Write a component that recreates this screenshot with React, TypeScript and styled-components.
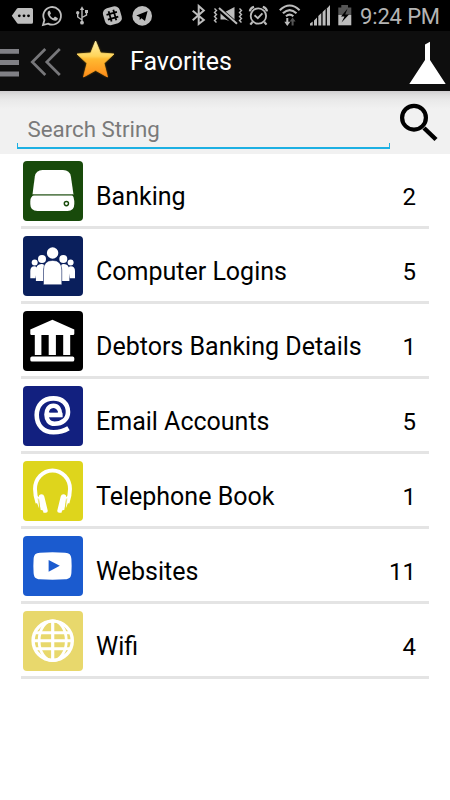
import React from "react";
import styled, { createGlobalStyle } from "styled-components";

const GlobalStyle = createGlobalStyle`
  * { box-sizing: border-box; }
  body { margin: 0; background: #fff; font-family: Roboto, "Liberation Sans", sans-serif; }
  svg { display: block; flex: none; }
`;

const Screen = styled.div`
  width: 450px;
  height: 800px;
  background: #fff;
  overflow: hidden;
`;

const StatusBar = styled.div`
  display: flex;
  height: 31px;
  background: #000;
`;

const Clock = styled.span`
  flex: 1;
  padding-left: 5px;
  font-size: 22px;
  line-height: 34px;
  letter-spacing: -0.15px;
  white-space: nowrap;
  color: #b4b4b4;
`;

const Header = styled.header`
  display: flex;
  height: 60px;
  background: #0e0e0e;
`;

const Title = styled.h1`
  flex: 1;
  margin: 0;
  padding-left: 6px;
  font-size: 25px;
  font-weight: 400;
  line-height: 61px;
  color: #fff;
`;

const SearchBar = styled.div`
  display: flex;
  height: 63px;
  padding-left: 17px;
  background: linear-gradient(#cfcdcf 0, #dedede 4px, #e9e9e9 9px, #f1f1f1 18px);
`;

const SearchField = styled.div`
  width: 373px;
  height: 58px;
  padding: 20px 0 0 10.5px;
  font-size: 22.3px;
  line-height: 36px;
  color: #7a7a7a;
  border-bottom: 2px solid #1db0e3;
  background:
    linear-gradient(#1db0e3, #1db0e3) left bottom / 1px 4px no-repeat,
    linear-gradient(#1db0e3, #1db0e3) right bottom / 1px 4px no-repeat;
`;

const List = styled.ul`
  margin: 0;
  padding: 0 21px;
  list-style: none;
`;

const Row = styled.li`
  display: flex;
  height: 75px;
  border-bottom: 3px solid #e4e4e4;
`;

const Tile = styled.div<{ $color: string }>`
  width: 60px;
  height: 60px;
  margin: 7px 0 0 1.5px;
  border-radius: 4px;
  background: ${(p) => p.$color};
`;

const Label = styled.span`
  flex: 1;
  padding-left: 13.5px;
  font-size: 25px;
  line-height: 85px;
  color: #000;
  white-space: nowrap;
`;

const Count = styled.span`
  padding-right: 13px;
  font-size: 24px;
  line-height: 86px;
  color: #000;
`;

type SliceProps = { x: number; w: number; y?: number; h?: number; children: React.ReactNode };

/* Icon cell whose drawing uses the coordinates of its bar. */
const Slice = ({ x, w, y = 0, h = 31, children }: SliceProps) => (
  <svg width={w} height={h} viewBox={`${x} ${y} ${w} ${h}`} fill="none">
    {children}
  </svg>
);

const G = "#bdbdbd";

const StatusIcons = () => (
  <>
    <Slice x={0} w={38}>
      <path d="M11.8 15.8 17 8.6Q17.4 8 18.2 8H31.5Q33 8 33 9.5V22.2Q33 23.7 31.5 23.7H18.2Q17.4 23.7 17 23Z" fill={G} />
      <g fill="#000"><circle cx="19.3" cy="15.8" r="1.4" /><circle cx="24" cy="15.8" r="1.4" /><circle cx="28.5" cy="15.8" r="1.4" /></g>
    </Slice>
    <Slice x={38} w={32}>
      <path d="M43 25 44.4 20A8.8 8.8 0 1 1 48 23.6Z" stroke={G} strokeWidth="1.8" />
      <path d="M49.3 10.8c-.8 0-1.8 1.1-1.7 2.8.3 3.6 4.5 7.3 7.8 7.2 1.6-.2 2.5-1.3 2.5-2.5l-2.9-1.7-1.6 1.6c-1.6-.6-2.8-1.8-3.5-3.3l1.1-1.4-1.2-2.7z" fill={G} />
    </Slice>
    <Slice x={70} w={28}>
      <path d="M82 9V23M82 20 77.7 17V13.5M82 17.5 86.5 15V11.5" stroke={G} strokeWidth="1.4" />
      <path d="M82 6.3 84.2 10H79.8Z" fill={G} /><circle cx="77.7" cy="12.8" r="1.7" fill={G} /><path d="M85 10h3v3h-3z" fill={G} /><circle cx="82" cy="22.7" r="1.9" fill={G} />
    </Slice>
    <Slice x={98} w={30}>
      <g transform="rotate(-16 112.4 15.7)">
        <rect x="103.7" y="7" width="17.4" height="17.4" rx="5.4" fill={G} />
        <path d="M110 10.3v10.8M114.9 10.3v10.8M107 13.3h10.8M107 18.2h10.8" stroke="#000" strokeWidth="1.8" />
      </g>
    </Slice>
    <Slice x={128} w={60}>
      <circle cx="142.2" cy="15.9" r="9.8" fill={G} />
      <path d="M136.3 15.6 147.6 11 145 21 141.5 18.2 139.7 20 139.6 17Z" fill="#000" />
    </Slice>
    <Slice x={188} w={22}>
      <path d="M192.7 10.7 203.8 20 198.7 24V6L203.8 10.5 192.7 20.2" stroke={G} strokeWidth="2" />
    </Slice>
    <Slice x={210} w={36}>
      <path d="M220.5 12h4.5L234.5 7V22.7L225 19.5h-4.5Z" fill={G} />
      <path d="M218.5 8.5 236 24" stroke="#000" strokeWidth="5" />
      <path d="M219 8 237 23.7" stroke={G} strokeWidth="2" />
      <path d="M214.5 8.5l2 2-2 2 2 2-2 2 2 2-2 2 2 2M239.5 8.5l2 2-2 2 2 2-2 2 2 2-2 2 2 2" stroke={G} strokeWidth="1.4" />
    </Slice>
    <Slice x={246} w={28}>
      <circle cx="258.4" cy="16" r="7.7" stroke={G} strokeWidth="1.8" />
      <path d="M249.8 11.4Q250.3 8 254 6.8M267 11.4Q266.5 8 262.8 6.8M252.5 22 250.3 24.6M264.3 22l2.2 2.6" stroke={G} strokeWidth="2.2" />
      <path d="M254.5 15.3 257.8 18.2 262.4 13.3" stroke={G} strokeWidth="1.8" />
    </Slice>
    <Slice x={274} w={32}>
      <path d="M279.8 10.2Q289.7 .8 299.6 10.2M282.9 13.3Q289.7 6.8 296.5 13.3M286 16.3Q289.7 12.8 293.3 16.3" stroke={G} strokeWidth="2.1" />
      <path d="M286.3 18h2v3.8h2L287.3 26l-3-4.2h2z" fill={G} />
      <path d="M291.6 25.5h2v-4h2L292.6 17.5l-3 4h2z" fill="#555" />
    </Slice>
    <Slice x={306} w={28}>
      <path d="M310 25.5V23.5L312.7 21.5V25.5ZM314 25.5V20.5L317 17.5V25.5ZM318.3 25.5V16L321.3 13V25.5ZM322.6 25.5V12L325.6 9V25.5Z" fill={G} />
      <path d="M326.9 25.5V8.5L330 5V25.5Z" fill={G} />
    </Slice>
    <Slice x={334} w={21}>
      <path d="M338.3 7.5h3V5h6.7v2.5h3.3V15h-13z" fill="#555" /><path d="M338.3 15h13v10.3h-13z" fill={G} />
      <path d="M347.6 8.5 341 16.5H344.5L341.5 22.5 349 14.5H345.2Z" fill="#000" />
    </Slice>
  </>
);

const icons: Record<string, React.ReactNode> = {
  drive: (
    <>
      <path d="M9.5 33.6 11.8 15.5Q13 9 19.5 9H40Q46.800 9 47.9 15.5L50.500 33.6Z" fill="#fff" />
      <path d="M11 33.800H49Q51.300 36 51.300 40V43Q51.300 50 44.500 50H14.500Q7.300 50 7.300 43V40Q7.300 36 11 33.800Z" fill="#fff" />
      <path d="M9.500 34H50" stroke="#184a0b" strokeWidth="1.1" />
      <circle cx="43.400" cy="42.600" r="2.100" stroke="#184a0b" strokeWidth="1.400" />
    </>
  ),
  people: (
    <g fill="#fff">
      <circle cx="11.700" cy="26.500" r="3" /><circle cx="47.600" cy="26.500" r="3" />
      <circle cx="19" cy="23" r="4" /><circle cx="40.300" cy="23" r="4" />
      <circle cx="29.600" cy="17" r="5.700" />
      <path d="M7.300 42.300V35Q7.300 30.300 11.500 30.300Q14 30.300 14 33L12.500 42.300ZM52 42.300V35Q52 30.300 47.800 30.300Q45.300 30.300 45.300 33L46.800 42.300Z" />
      <path d="M12.900 45V35Q12.900 28 18.500 28Q22.800 28 20.600 33V45ZM46.400 45V35Q46.400 28 40.800 28Q36.500 28 38.700 33V45Z" />
      <path d="M20.500 48.700V34Q20.500 24.400 29.600 24.400T38.800 34V48.700Z" stroke="#0a1f5c" strokeWidth=".5" />
    </g>
  ),
  bank: (
    <path d="M29.400 8.800 51.300 18.500V22.700Q51.300 24 50 24H47.200V44H40.200V24H32.900V44H25.700V24H18.400V44H11.800V24H8.500Q7.300 24 7.300 22.700V18.500ZM9 45.500H49.600Q51.300 45.500 51.300 47V49Q51.300 50.600 49.600 50.600H9Q7.300 50.600 7.300 49V47Q7.300 45.500 9 45.500Z" fill="#fff" />
  ),
  at: (
    <>
      <path d="M24 28.700H37C37 23 34.500 19.800 30.500 19.800C26 19.800 23.500 23.500 23.500 28.500C23.500 34 26.500 37.800 31.500 37.800C39.500 37.800 45 33 45 26C45 17.500 39 12.400 30.500 12.400C20 12.400 13.700 19.500 13.700 29C13.700 39.500 20.500 46.200 30.500 46.200C36.500 46.200 41 45 45.500 42.200" stroke="#fff" strokeWidth="4.600" />
      <path d="M22 31.300H39.500V26.700H22Z" fill="#fff" />
      <path d="M26.600 26.400Q27.200 22.800 30.500 22.800Q34.500 22.800 35 26.400Z" fill="#12207f" />
    </>
  ),
  headphones: (
    <>
      <path d="M14.500 42C12.500 36 12 32.500 12 28A17.500 18.500 0 0 1 47 28C47 32.500 46.500 36 44.500 42" stroke="#fff" strokeWidth="3.900" />
      <path d="M10.800 34 16.200 47.500V36ZM48.200 34 42.800 47.500V36Z" fill="#fff" />
      <path d="M17.300 33.500Q20.500 32.700 21.300 35.500L24.700 49.500Q25 51.700 22.800 51.700H20.500L19.900 49.600L17.500 48.700L15.800 36Q15.700 34 17.300 33.500ZM41.700 33.500Q38.500 32.700 37.700 35.500L34.300 49.500Q34 51.700 36.200 51.700H38.500L39.100 49.600L41.500 48.700L43.200 36Q43.300 34 41.700 33.500Z" fill="#fff" />
      <path d="M15.100 37.500 17 48.500M43.900 37.500 42 48.500" stroke="#ded51c" strokeWidth=".6" />
    </>
  ),
  video: (
    <>
      <path d="M17 16.700Q29.500 15.900 42 16.700C46.500 16.900 48 18.500 48.400 23Q48.900 30 48.400 37C48 41.500 46.500 43 42 43.300Q29.500 44.200 17 43.300C12.500 43 11 41.500 10.600 37Q10.100 30 10.600 23C11 18.500 12.500 16.900 17 16.700Z" fill="#fff" />
      <path d="M25.600 24 36.800 29.800 25.600 35.700Z" fill="#1b5bcf" />
    </>
  ),
  globe: (
    <g stroke="#fff" strokeWidth="3">
      <circle cx="29.700" cy="29.700" r="19.600" strokeWidth="3.400" />
      <ellipse cx="29.700" cy="29.700" rx="13.6" ry="20" strokeWidth="2.8" />
      <path d="M29.700 10V49.600" strokeWidth="3.2" />
      <path d="M10 29.700H49.500M12.500 21.700H47M12.500 37.700H47" />
    </g>
  ),
};

const categories = [
  { icon: "drive", color: "#184a0b", label: "Banking", count: 2 },
  { icon: "people", color: "#0a1f5c", label: "Computer Logins", count: 5 },
  { icon: "bank", color: "#000000", label: "Debtors Banking Details", count: 1 },
  { icon: "at", color: "#12207f", label: "Email Accounts", count: 5 },
  { icon: "headphones", color: "#ded51c", label: "Telephone Book", count: 1 },
  { icon: "video", color: "#1b5bcf", label: "Websites", count: 11 },
  { icon: "globe", color: "#e8d86c", label: "Wifi", count: 4 },
];

export default function App() {
  return (
    <Screen>
      <GlobalStyle />
      <StatusBar>
        <StatusIcons />
        <Clock>9:24 PM</Clock>
      </StatusBar>
      <Header>
        <Slice x={0} w={24} y={31} h={60}>
          <path d="M0 51.400H19M0 62.500H19M0 74H19" stroke="#808085" strokeWidth="4.800" />
        </Slice>
        <Slice x={24} w={46} y={31} h={60}>
          <path d="M45.300 49 32.300 62 45.300 75M59.800 49 46.800 62 59.800 75" stroke="#77777a" strokeWidth="2.700" />
        </Slice>
        <Slice x={70} w={54} y={31} h={60}>
          <defs>
            <linearGradient id="star" x1="0" y1="0" x2="0" y2="1">
              <stop offset="0" stopColor="#fff0a8" /><stop offset=".42" stopColor="#ffd45a" />
              <stop offset=".5" stopColor="#ffba32" /><stop offset="1" stopColor="#ff8c18" />
            </linearGradient>
            <filter id="glow" x="-20%" y="-20%" width="140%" height="140%"><feGaussianBlur stdDeviation="1.2" /></filter>
          </defs>
          <path d="M95.600 41 100.500 53 114 54 104 63.300 107.500 77 95.600 70.300 83.500 77 87 63.300 77 54 90.800 53Z" fill="#a87800" filter="url(#glow)" />
          <path d="M95.600 41 100.500 53 114 54 104 63.300 107.500 77 95.600 70.300 83.500 77 87 63.300 77 54 90.800 53Z" fill="url(#star)" stroke="url(#star)" strokeWidth=".8" strokeLinejoin="round" />
        </Slice>
        <Title>Favorites</Title>
        <Slice x={400} w={50} y={31} h={60}>
          <path d="M409.300 84 425 60V44.500L430 41.700V60L445.700 84Z" fill="#fff" />
        </Slice>
      </Header>
      <SearchBar>
        <SearchField>Search String</SearchField>
        <Slice x={390} w={60} y={91} h={63}>
          <circle cx="414" cy="117.700" r="11.900" stroke="#000" strokeWidth="4.200" />
          <path d="M424 128 436 139.500" stroke="#000" strokeWidth="4.500" />
        </Slice>
      </SearchBar>
      <List>
        {categories.map((c) => (
          <Row key={c.label}>
            <Tile $color={c.color}>
              <svg width="60" height="60" viewBox="0 0 60 60" fill="none">{icons[c.icon]}</svg>
            </Tile>
            <Label>{c.label}</Label>
            <Count>{c.count}</Count>
          </Row>
        ))}
      </List>
    </Screen>
  );
}
